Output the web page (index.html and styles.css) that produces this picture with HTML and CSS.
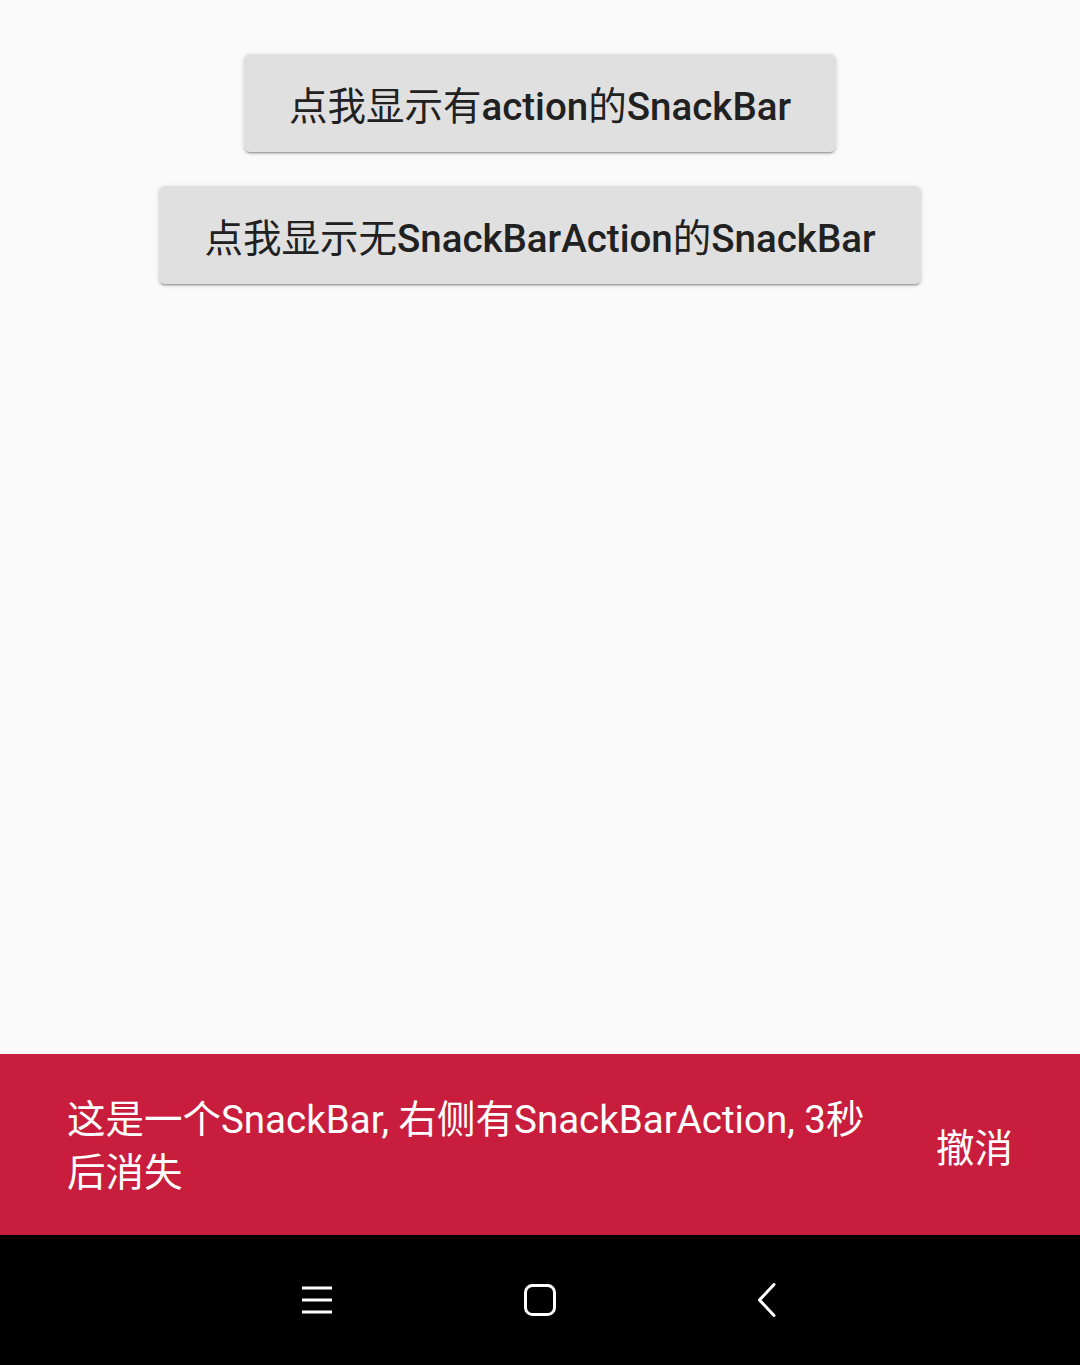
FILE: index.html
```html
<!DOCTYPE html>
<html lang="zh-CN">
<head>
<meta charset="utf-8">
<title>SnackBar</title>
<link rel="stylesheet" href="styles.css">
</head>
<body>
<div class="screen">
  <main class="content">
    <button class="btn btn-action"><span class="cjk">点我显示有</span>action<span class="cjk">的</span>SnackBar</button>
    <button class="btn btn-noaction"><span class="cjk">点我显示无</span>SnackBarAction<span class="cjk">的</span>SnackBar</button>
  </main>
  <div class="snackbar">
    <div class="snack-msg">这是一个SnackBar, 右侧有SnackBarAction, 3秒后消失</div>
    <div class="snack-action">撤消</div>
  </div>
  <nav class="navbar">
    <div class="nav-cell">
      <svg width="30" height="28" viewBox="0 0 30 28"><g stroke="#fff" stroke-width="3" stroke-linecap="butt"><line x1="0" y1="2" x2="30" y2="2"/><line x1="0" y1="14" x2="30" y2="14"/><line x1="0" y1="26" x2="30" y2="26"/></g></svg>
    </div>
    <div class="nav-cell">
      <svg width="32" height="32" viewBox="0 0 32 32"><rect x="1.5" y="1.5" width="29" height="29" rx="7" ry="7" fill="none" stroke="#fff" stroke-width="3"/></svg>
    </div>
    <div class="nav-cell nav-back">
      <svg width="20" height="34" viewBox="0 0 20 34"><polyline points="17,1.5 2.5,17 17,32.5" fill="none" stroke="#fff" stroke-width="3" stroke-linecap="round" stroke-linejoin="round"/></svg>
    </div>
  </nav>
</div>
</body>
</html>
```
FILE: styles.css
```css
* { box-sizing: border-box; }
html, body { margin: 0; padding: 0; }
body {
  width: 1080px;
  height: 1365px;
  background: #fafafa;
  font-family: Roboto, "Noto Sans CJK SC", sans-serif;
  overflow: hidden;
}
.screen {
  display: flex;
  flex-direction: column;
  height: 1365px;
}
.content {
  flex: 1;
  display: flex;
  flex-direction: column;
  align-items: center;
  padding-top: 54px;
  gap: 34px;
}
.btn {
  height: 98px;
  border: none;
  border-radius: 6px;
  background: #e0e0e0;
  color: #212121;
  font-family: Roboto, "Noto Sans CJK SC", sans-serif;
  font-size: 38.5px;
  font-weight: 500;
  padding: 0 45px;
  box-shadow: 0 3px 1px -2px rgba(0,0,0,0.2), 0 2px 2px 0 rgba(0,0,0,0.14), 0 1px 5px 0 rgba(0,0,0,0.12);
  white-space: nowrap;
}
.cjk { font-weight: 400; }
.snackbar {
  height: 181px;
  background: #c81d3c;
  display: flex;
  align-items: center;
  padding: 0 67px 0 67px;
  color: #fff;
}
.snack-msg {
  flex: 1;
  font-size: 38.5px;
  line-height: 53px;
  font-weight: 400;
  padding-top: 2px;
}
.snack-action {
  margin-left: 50px;
  font-size: 38.5px;
  font-weight: 400;
  white-space: nowrap;
}
.navbar {
  height: 130px;
  background: #000;
  display: flex;
  justify-content: center;
  align-items: center;
  gap: 163px;
  padding-left: 4px;
}
.nav-cell {
  width: 60px;
  display: flex;
  justify-content: center;
  align-items: center;
}
.nav-back { margin-left: 4px; }
.nav-cell svg { display: block; }
```
